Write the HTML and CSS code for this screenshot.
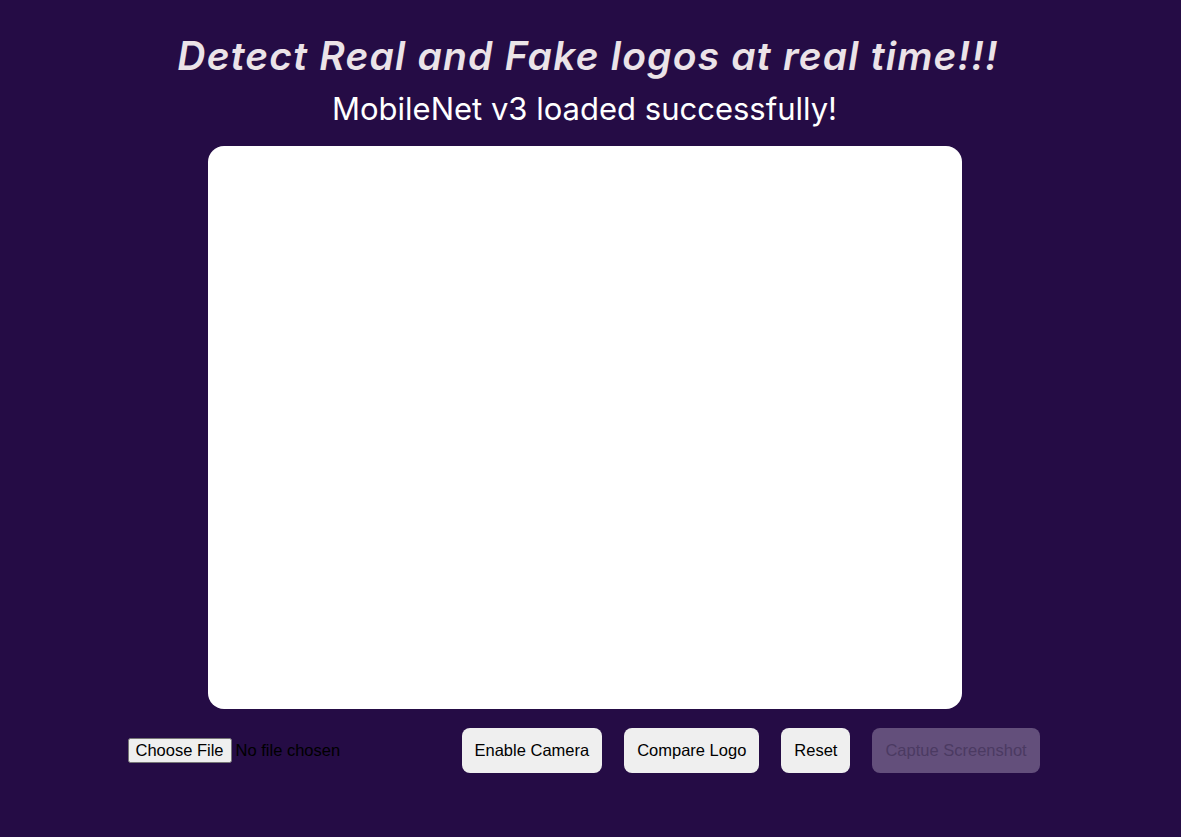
FILE: index.html
```html
<!DOCTYPE html>
<html>
<head>
<meta charset="utf-8">
<link rel="stylesheet" href="styles.css">
</head>
<body>
<main class="app">
  <h1 class="title">Detect Real and Fake logos at real time!!!</h1>
  <h2 class="status">MobileNet v3 loaded successfully!</h2>
  <div class="canvas-box"></div>
  <div class="controls">
    <input class="file" type="file">
    <div class="buttons">
      <button class="btn">Enable Camera</button>
      <button class="btn">Compare Logo</button>
      <button class="btn">Reset</button>
      <button class="btn" disabled>Captue Screenshot</button>
    </div>
  </div>
</main>
</body>
</html>
```
FILE: styles.css
```css
html, body {
  margin: 0;
  padding: 0;
  background: #250c45;
  height: 100%;
}
.app {
  display: flex;
  flex-direction: column;
  align-items: center;
  padding-top: 30px;
  font-family: "Inter", sans-serif;
}
.title {
  margin: 0;
  font-size: 39px;
  font-weight: 600;
  font-style: italic;
  color: #ebe3e8;
  line-height: 52px;
  letter-spacing: 1.2px;
  margin-left: -5px;
}
.status {
  margin: 0;
  font-size: 31px;
  font-weight: 400;
  color: #ffffff;
  line-height: 44px;
  margin-top: 5px;
  margin-left: -12px;
}
.canvas-box {
  margin-top: 15px;
  width: 754px;
  height: 563px;
  background: #ffffff;
  border-radius: 16px;
  margin-left: -12px;
}
.controls {
  display: flex;
  align-items: center;
  margin-top: 19px;
  width: 911px;
  margin-left: -15px;
}
.file {
  flex-shrink: 0;
  font-family: "Liberation Sans", Arial, sans-serif;
  font-size: 16.5px;
  color: #000;
  width: 334px;
}
.buttons {
  display: flex;
  flex-shrink: 0;
  gap: 22px;
}
.btn {
  flex-shrink: 0;
  white-space: nowrap;
  font-family: "Liberation Sans", Arial, sans-serif;
  font-size: 16.5px;
  color: #000;
  background: #efefef;
  border: none;
  border-radius: 8px;
  height: 45px;
  padding: 0 13px;
}
.btn:disabled {
  background: #634f7b;
  color: #4b3a62;
}
```
